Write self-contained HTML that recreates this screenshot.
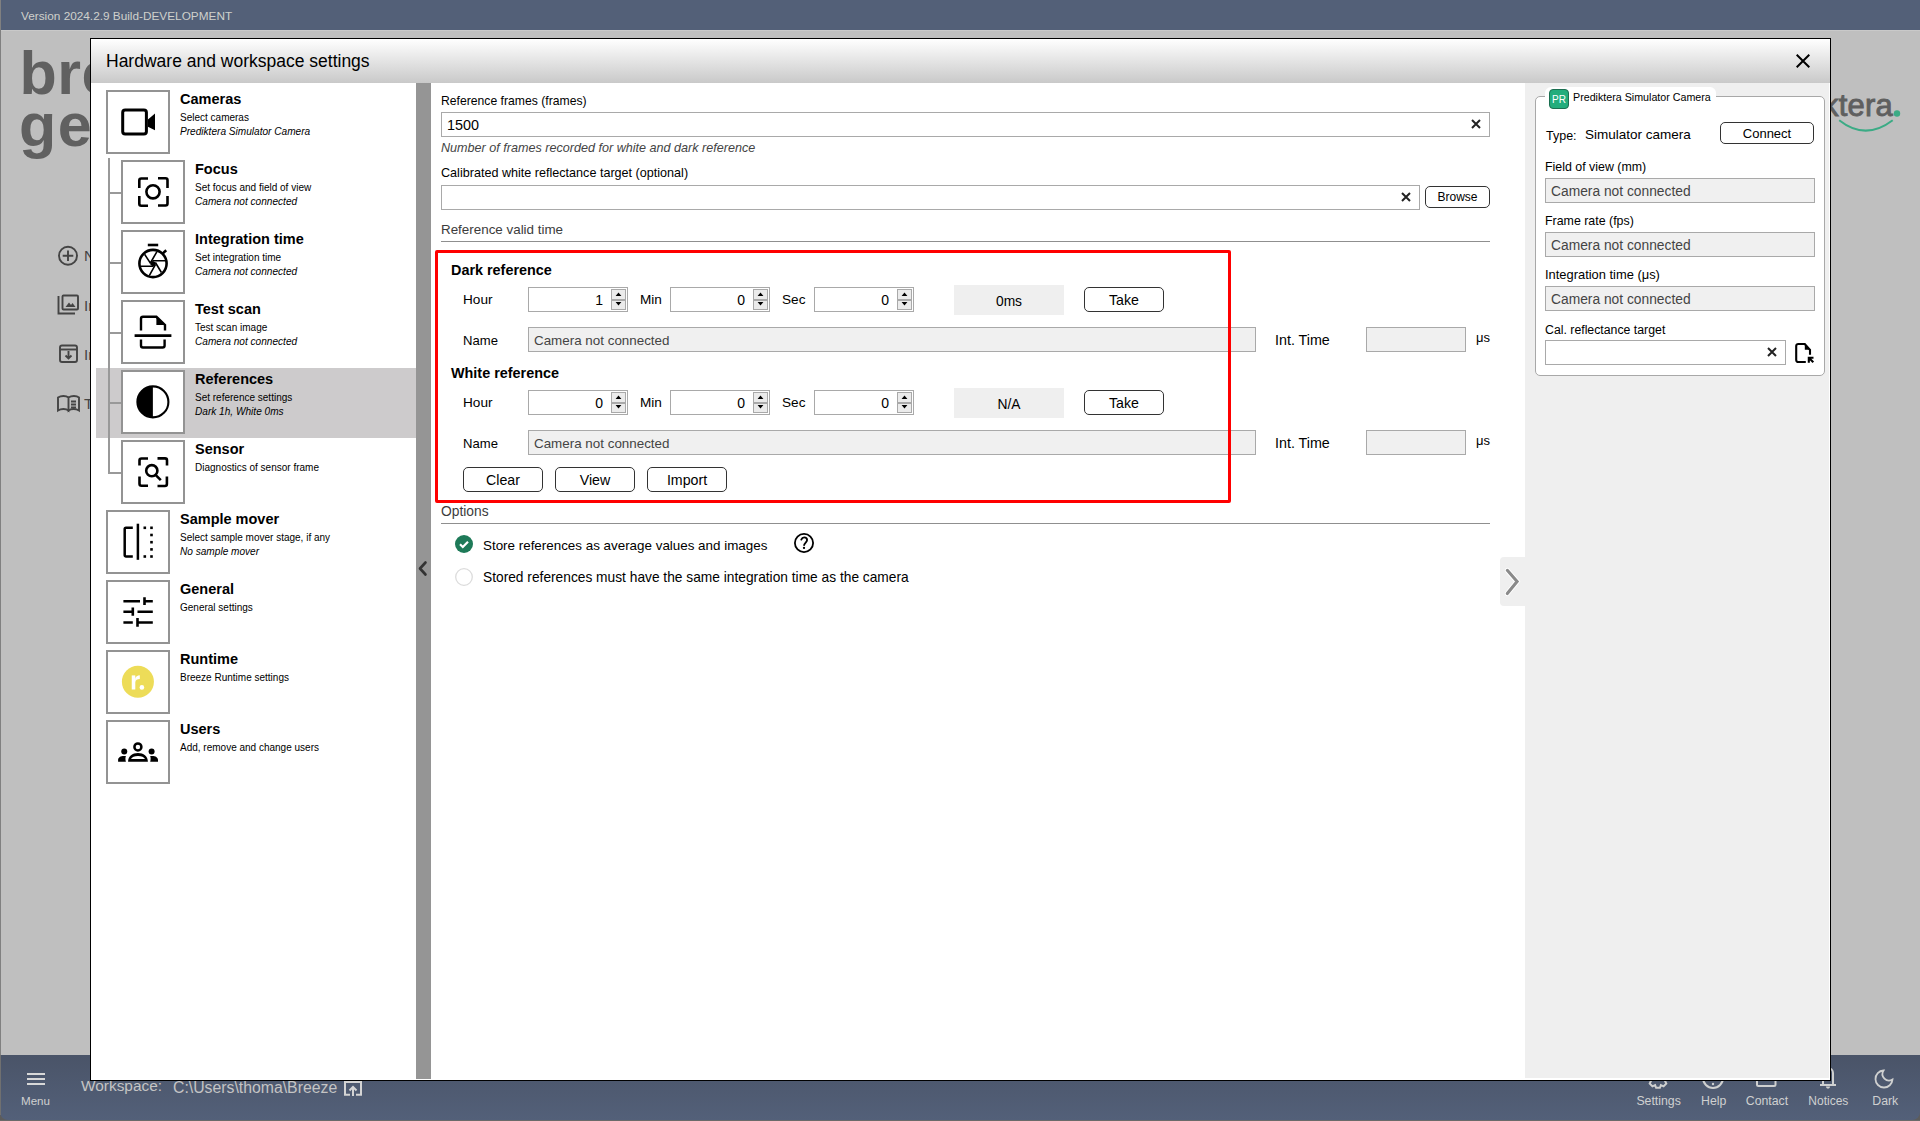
<!DOCTYPE html><html><head><meta charset="utf-8"><style>
html,body{margin:0;padding:0;}
body{width:1920px;height:1121px;position:relative;overflow:hidden;background:#bfbfbf;font-family:"Liberation Sans",sans-serif;}
.t{position:absolute;white-space:nowrap;}
.r{position:absolute;box-sizing:border-box;}
</style></head><body>
<div class="r" style="left:0px;top:0px;width:1920px;height:30px;background:#536078;"></div>
<div class="r" style="left:0px;top:30px;width:1920px;height:1px;background:#c9c9c9;"></div>
<div class="r" style="left:0px;top:0px;width:1px;height:1121px;background:#808080;"></div>
<div class="t" style="left:21px;top:10.81px;font-size:11.8px;line-height:11.8px;color:#cfd0cc;">Version 2024.2.9 Build-DEVELOPMENT</div>
<div class="t" style="left:19.5px;top:43.36px;font-size:61px;line-height:61px;color:#606060;font-weight:bold;letter-spacing:0.5px;">breeze</div>
<div class="t" style="left:19px;top:94.86px;font-size:61px;line-height:61px;color:#606060;font-weight:bold;letter-spacing:1.5px;">genie</div>
<div class="t" style="left:1823px;top:89.76px;font-size:31px;line-height:31px;color:#5f5f5f;-webkit-text-stroke:0.9px #5f5f5f;letter-spacing:0.2px;">ktera</div>
<svg class="r" style="left:1830px;top:95px;" width="90" height="45" viewBox="0 0 90 45"><circle cx="67" cy="18.5" r="3.2" fill="#3bab85"/><path d="M9.2 25.2 Q35.5 46 62.7 25.2" fill="none" stroke="#3bab85" stroke-width="2"/></svg>
<svg class="r" style="left:50px;top:240px;" width="40" height="180" viewBox="0 0 40 180"><g fill="none" stroke="#444" stroke-width="1.9"><circle cx="18" cy="15.8" r="9"/><path d="M18 10.5v10.6M12.7 15.8h10.6"/><path d="M8.5 56v17.5h16.5"/><rect x="12.5" y="55.5" width="15.5" height="14" rx="1"/><path d="M15.5 67l3.5-4.5 2 2.5 1.5-2 3 4z" fill="#444" stroke="none"/><rect x="10" y="105.5" width="17" height="16.5" rx="2"/><path d="M10 109.5h17"/><path d="M18.5 111v7M15.5 115.5l3 3 3-3"/><path d="M8 157.5c3-2 8-2 10.5 0v13c-2.5-2-7.5-2-10.5 0zM18.5 157.5c3-2 8-2 10.5 0v13c-3-2-8-2-10.5 0z"/><path d="M21 161.5h5M21 164.5h5M21 167.5h5"/></g></svg>
<div class="t" style="left:84px;top:248.30px;font-size:15px;line-height:15px;color:#444;">New</div>
<div class="t" style="left:84px;top:298.30px;font-size:15px;line-height:15px;color:#444;">Images</div>
<div class="t" style="left:84px;top:347.30px;font-size:15px;line-height:15px;color:#444;">Import</div>
<div class="t" style="left:84px;top:396.30px;font-size:15px;line-height:15px;color:#444;">Tutorials</div>
<div class="r" style="left:0px;top:1100px;width:1920px;height:21px;background:#5c5c5c;"></div>
<div class="r" style="left:0;top:1055px;width:1920px;height:65px;background:linear-gradient(#4a5468,#536079);border-radius:0 0 8px 8px;"></div>
<div class="r" style="left:0px;top:1120px;width:1920px;height:1px;background:#6a6a6a;"></div>
<div class="r" style="left:0px;top:1055px;width:1px;height:60px;background:#707070;"></div>
<svg class="r" style="left:27px;top:1073px;" width="18" height="12" viewBox="0 0 18 12"><path d="M0 1h18M0 6h18M0 11h18" stroke="#d8d8d8" stroke-width="2"/></svg>
<div class="t" style="left:21px;top:1095.18px;font-size:11.6px;line-height:11.6px;color:#cfd0d0;">Menu</div>
<div class="t" style="left:81px;top:1077.96px;font-size:15.4px;line-height:15.4px;color:#c4c4c4;">Workspace:</div>
<div class="t" style="left:173px;top:1079.63px;font-size:15.8px;line-height:15.8px;color:#c4c4c4;">C:\Users\thoma\Breeze</div>
<svg class="r" style="left:343px;top:1080px;" width="21" height="17" viewBox="0 0 21 17"><path d="M7 14.7H2V2h16v12.7h-5" fill="none" stroke="#d4d4d4" stroke-width="2"/><path d="M10 16V7.5M6.5 10.5 10 7l3.5 3.5" fill="none" stroke="#d4d4d4" stroke-width="2"/></svg>
<div class="t" style="left:1636.4px;top:1094.59px;font-size:12.3px;line-height:12.3px;color:#cfd0d0;">Settings</div>
<div class="t" style="left:1701px;top:1094.59px;font-size:12.3px;line-height:12.3px;color:#cfd0d0;">Help</div>
<div class="t" style="left:1745.8px;top:1094.59px;font-size:12.3px;line-height:12.3px;color:#cfd0d0;">Contact</div>
<div class="t" style="left:1808.3px;top:1094.84px;font-size:12.0px;line-height:12.0px;color:#cfd0d0;">Notices</div>
<div class="t" style="left:1872.3px;top:1094.59px;font-size:12.3px;line-height:12.3px;color:#cfd0d0;">Dark</div>
<svg class="r" style="left:1640px;top:1060px;" width="260" height="32" viewBox="0 0 260 32"><g fill="none" stroke="#cfd0d0" stroke-width="2"><path d="M15.09 10.98 L16.09 8.18 L19.91 8.18 L20.91 10.98 L20.91 10.98 L23.59 9.71 L26.29 12.41 L25.02 15.09 L25.02 15.09 L27.82 16.09 L27.82 19.91 L25.02 20.91 L25.02 20.91 L26.29 23.59 L23.59 26.29 L20.91 25.02 L20.91 25.02 L19.91 27.82 L16.09 27.82 L15.09 25.02 L15.09 25.02 L12.41 26.29 L9.71 23.59 L10.98 20.91 L10.98 20.91 L8.18 19.91 L8.18 16.09 L10.98 15.09 L10.98 15.09 L9.71 12.41 L12.41 9.71 L15.09 10.98Z"/><circle cx="73" cy="18" r="10"/><rect x="117" y="8" width="18.5" height="18" rx="1.5"/><path d="M180 25h16"/><path d="M185.9 26.6h4.2a2.1 2.1 0 0 1-4.2 0z" fill="#cfd0d0" stroke="none"/><path d="M183 24V13a5 5 0 0 1 10 0v11"/><path transform="translate(244 19)" d="M-0.486 -8.486A8.5 8.5 0 1 0 8.486 0.486A6.5 6.5 0 0 1 -0.486 -8.486Z" stroke-width="1.8"/></g><circle cx="73" cy="24" r="1.2" fill="#cfd0d0"/></svg>
<div class="r" style="left:90px;top:38px;width:1741px;height:1043px;border:1px solid #000;background:#fff;"></div>
<div class="r" style="left:91px;top:39px;width:1739px;height:44px;background:linear-gradient(#ffffff,#c9c9c9);"></div>
<div class="t" style="left:106px;top:53.19px;font-size:17.5px;line-height:17.5px;color:#000;">Hardware and workspace settings</div>
<svg class="r" style="left:1796px;top:54px;" width="14" height="14" viewBox="0 0 14 14"><path d="M0.7 0.7L13.3 13.3M13.3 0.7L0.7 13.3" stroke="#000" stroke-width="2"/></svg>
<div class="r" style="left:91px;top:83px;width:325px;height:996px;background:#fff;"></div>
<div class="r" style="left:96px;top:368px;width:320px;height:70px;background:#cdcbcc;"></div>
<div class="r" style="left:108px;top:158px;width:2px;height:316px;background:#999;"></div>
<div class="r" style="left:110px;top:192px;width:11px;height:2px;background:#999;"></div>
<div class="r" style="left:110px;top:262px;width:11px;height:2px;background:#999;"></div>
<div class="r" style="left:110px;top:332px;width:11px;height:2px;background:#999;"></div>
<div class="r" style="left:110px;top:402px;width:11px;height:2px;background:#999;"></div>
<div class="r" style="left:110px;top:472px;width:11px;height:2px;background:#999;"></div>
<div class="r" style="left:106px;top:90px;width:64px;height:64px;border:2px solid #939393;background:#fff;"></div>
<svg class="r" style="left:106px;top:90px;" width="64" height="64" viewBox="0 0 64 64"><rect x="16.7" y="20" width="23.7" height="24" rx="2.5" fill="none" stroke="#000" stroke-width="3"/><path d="M41.9 29.4L49 23.6V40.3L41.9 36.8Z" fill="#000"/></svg>
<div class="t" style="left:180px;top:91.73px;font-size:14.5px;line-height:14.5px;color:#000;font-weight:bold;">Cameras</div>
<div class="t" style="left:180px;top:112.53px;font-size:10px;line-height:10px;color:#000;">Select cameras</div>
<div class="t" style="left:180px;top:127.45px;font-size:10.1px;line-height:10.1px;color:#000;font-style:italic;">Prediktera Simulator Camera</div>
<div class="r" style="left:121px;top:160px;width:64px;height:64px;border:2px solid #939393;background:#fff;"></div>
<svg class="r" style="left:121px;top:160px;" width="64" height="64" viewBox="0 0 64 64"><g fill="none" stroke="#000" stroke-width="2.6"><path d="M18.3 28V20.5a2 2 0 0 1 2-2H27M37 18.3h7.5a2 2 0 0 1 2 2V28M46.5 36v7.5a2 2 0 0 1-2 2H37M27 45.7h-6.7a2 2 0 0 1-2-2V36"/><circle cx="32" cy="31.8" r="6.6"/></g></svg>
<div class="t" style="left:195px;top:161.73px;font-size:14.5px;line-height:14.5px;color:#000;font-weight:bold;">Focus</div>
<div class="t" style="left:195px;top:182.53px;font-size:10px;line-height:10px;color:#000;">Set focus and field of view</div>
<div class="t" style="left:195px;top:197.45px;font-size:10.1px;line-height:10.1px;color:#000;font-style:italic;">Camera not connected</div>
<div class="r" style="left:121px;top:230px;width:64px;height:64px;border:2px solid #939393;background:#fff;"></div>
<svg class="r" style="left:121px;top:230px;" width="64" height="64" viewBox="0 0 64 64"><g fill="none" stroke="#000"><circle cx="32" cy="33.5" r="13.6" stroke-width="2.6"/><path d="M26.8 15h10.4" stroke-width="2.6"/><path d="M41.6 23.6l3.6-3.4" stroke-width="2.6"/><path d="M23.6 24.3L29.7 33.6M35.8 21.8L29.7 32.5M31.9 30.7H45M34.4 32.5L40.4 42.5M34.4 34.6L28.3 45.7M19.5 36.3H32.2" stroke-width="1.6"/></g><path d="M29.7 32.8L31.6 30.7L34.6 32.4L34.5 34.9L32.3 36.5L29.4 35Z" fill="#000"/></svg>
<div class="t" style="left:195px;top:231.73px;font-size:14.5px;line-height:14.5px;color:#000;font-weight:bold;">Integration time</div>
<div class="t" style="left:195px;top:252.53px;font-size:10px;line-height:10px;color:#000;">Set integration time</div>
<div class="t" style="left:195px;top:267.45px;font-size:10.1px;line-height:10.1px;color:#000;font-style:italic;">Camera not connected</div>
<div class="r" style="left:121px;top:300px;width:64px;height:64px;border:2px solid #939393;background:#fff;"></div>
<svg class="r" style="left:121px;top:300px;" width="64" height="64" viewBox="0 0 64 64"><g fill="none" stroke="#000" stroke-width="2.4"><path d="M20 30.5V18.8a2 2 0 0 1 2-2H35.4L44 25V30.5"/><path d="M13.6 35.6H50.4" stroke-width="2.8"/><path d="M20 39.5v6a2 2 0 0 0 2 2h19.6a2 2 0 0 0 2-2v-6"/></g><path d="M35.4 16.8L44 25H35.4Z" fill="#000"/></svg>
<div class="t" style="left:195px;top:301.73px;font-size:14.5px;line-height:14.5px;color:#000;font-weight:bold;">Test scan</div>
<div class="t" style="left:195px;top:322.53px;font-size:10px;line-height:10px;color:#000;">Test scan image</div>
<div class="t" style="left:195px;top:337.45px;font-size:10.1px;line-height:10.1px;color:#000;font-style:italic;">Camera not connected</div>
<div class="r" style="left:121px;top:370px;width:64px;height:64px;border:2px solid #939393;background:#fff;"></div>
<svg class="r" style="left:121px;top:370px;" width="64" height="64" viewBox="0 0 64 64"><circle cx="31.9" cy="31.9" r="15.5" fill="none" stroke="#000" stroke-width="2.1"/><path d="M31.9 16.4A15.5 15.5 0 0 0 31.9 47.4Z" fill="#000"/></svg>
<div class="t" style="left:195px;top:371.73px;font-size:14.5px;line-height:14.5px;color:#000;font-weight:bold;">References</div>
<div class="t" style="left:195px;top:392.53px;font-size:10px;line-height:10px;color:#000;">Set reference settings</div>
<div class="t" style="left:195px;top:407.45px;font-size:10.1px;line-height:10.1px;color:#000;font-style:italic;">Dark 1h, White 0ms</div>
<div class="r" style="left:121px;top:440px;width:64px;height:64px;border:2px solid #939393;background:#fff;"></div>
<svg class="r" style="left:121px;top:440px;" width="64" height="64" viewBox="0 0 64 64"><g fill="none" stroke="#000" stroke-width="2.6"><path d="M18.5 25.5V20.5a2 2 0 0 1 2-2H27M36.5 18.4h7.5a2 2 0 0 1 2 2V25.5M45.9 36.5v7.5a2 2 0 0 1-2 2H36.5M27 45.8h-6.5a2 2 0 0 1-2-2V36.5"/><circle cx="30.8" cy="30.7" r="5.6"/><path d="M34.8 35.2L39.8 40.2"/></g></svg>
<div class="t" style="left:195px;top:441.73px;font-size:14.5px;line-height:14.5px;color:#000;font-weight:bold;">Sensor</div>
<div class="t" style="left:195px;top:462.53px;font-size:10px;line-height:10px;color:#000;">Diagnostics of sensor frame</div>
<div class="r" style="left:106px;top:510px;width:64px;height:64px;border:2px solid #939393;background:#fff;"></div>
<svg class="r" style="left:106px;top:510px;" width="64" height="64" viewBox="0 0 64 64"><g fill="none" stroke="#000" stroke-width="2.5"><path d="M26.8 17.7H20a1.3 1.3 0 0 0-1.3 1.3V45.2a1.3 1.3 0 0 0 1.3 1.3H26.8"/><path d="M31.9 13.7V49.8"/></g><g fill="#000"><rect x="37.5" y="16.5" width="2.6" height="2.6"/><rect x="37.5" y="45.2" width="2.6" height="2.6"/><rect x="44.2" y="16.5" width="2.6" height="2.6"/><rect x="44.2" y="23.7" width="2.6" height="2.6"/><rect x="44.2" y="30.9" width="2.6" height="2.6"/><rect x="44.2" y="38.1" width="2.6" height="2.6"/><rect x="44.2" y="45.2" width="2.6" height="2.6"/></g></svg>
<div class="t" style="left:180px;top:511.73px;font-size:14.5px;line-height:14.5px;color:#000;font-weight:bold;">Sample mover</div>
<div class="t" style="left:180px;top:532.54px;font-size:10px;line-height:10px;color:#000;">Select sample mover stage, if any</div>
<div class="t" style="left:180px;top:547.45px;font-size:10.1px;line-height:10.1px;color:#000;font-style:italic;">No sample mover</div>
<div class="r" style="left:106px;top:580px;width:64px;height:64px;border:2px solid #939393;background:#fff;"></div>
<svg class="r" style="left:106px;top:580px;" width="64" height="64" viewBox="0 0 64 64"><g fill="none" stroke="#000" stroke-width="2.6"><path d="M17.4 21.2H34M38.5 21.2H46.8M38.5 17.3V25"/><path d="M17.4 31.8H26.8M26.8 27.5V35.8M31.5 31.8H46.8"/><path d="M17.4 42.5H26.8M31.5 38V46.7M31.5 42.5H46.8"/></g></svg>
<div class="t" style="left:180px;top:581.73px;font-size:14.5px;line-height:14.5px;color:#000;font-weight:bold;">General</div>
<div class="t" style="left:180px;top:602.54px;font-size:10px;line-height:10px;color:#000;">General settings</div>
<div class="r" style="left:106px;top:650px;width:64px;height:64px;border:2px solid #939393;background:#fff;"></div>
<svg class="r" style="left:106px;top:650px;" width="64" height="64" viewBox="0 0 64 64"><circle cx="31.9" cy="31.8" r="16" fill="#eddc58"/><g fill="#fff"><rect x="25.75" y="25.4" width="3.55" height="14.1"/><path d="M29.1 28.8C29.6 26.4 31.5 25.2 33.8 25.2V28.9C31.3 28.9 29.3 30 29.3 32.5Z"/><circle cx="35.9" cy="37.4" r="2.3"/></g></svg>
<div class="t" style="left:180px;top:651.73px;font-size:14.5px;line-height:14.5px;color:#000;font-weight:bold;">Runtime</div>
<div class="t" style="left:180px;top:672.54px;font-size:10px;line-height:10px;color:#000;">Breeze Runtime settings</div>
<div class="r" style="left:106px;top:720px;width:64px;height:64px;border:2px solid #939393;background:#fff;"></div>
<svg class="r" style="left:106px;top:720px;" width="64" height="64" viewBox="0 0 64 64"><g fill="#000"><circle cx="18.25" cy="31.4" r="3"/><circle cx="45.6" cy="31.4" r="3"/><path d="M12.1 41.75V40C12.1 37.5 14.5 36 18 36H19.9C19.3 37.5 19.3 40 19.9 41.75Z"/><path d="M52 41.75V40C52 37.5 49.6 36 46.1 36H44.2C44.8 37.5 44.8 40 44.2 41.75Z"/><path fill-rule="evenodd" d="M22.1 41.75C22.1 36.5 26.5 33.1 32 33.1C37.5 33.1 41.9 36.5 41.9 41.75ZM25 39.1C26 36.9 28.5 35.9 32 35.9C35.5 35.9 38 36.9 39 39.1Z"/></g><circle cx="31.9" cy="26.9" r="3.5" fill="none" stroke="#000" stroke-width="2.5"/></svg>
<div class="t" style="left:180px;top:721.73px;font-size:14.5px;line-height:14.5px;color:#000;font-weight:bold;">Users</div>
<div class="t" style="left:180px;top:742.54px;font-size:10px;line-height:10px;color:#000;">Add, remove and change users</div>
<div class="r" style="left:416px;top:83px;width:15px;height:996px;background:#959595;"></div>
<svg class="r" style="left:417px;top:560px;" width="12" height="17" viewBox="0 0 12 17"><path d="M8.5 2.5L3 8.5l5.5 6" fill="none" stroke="#333" stroke-width="2.6" stroke-linecap="round" stroke-linejoin="round"/></svg>
<div class="r" style="left:431px;top:83px;width:1094px;height:996px;background:#fff;"></div>
<div class="t" style="left:441px;top:94.67px;font-size:12.2px;line-height:12.2px;color:#000;">Reference frames (frames)</div>
<div class="r" style="left:441px;top:112px;width:1049px;height:25px;border:1px solid #a9a9a9;background:#fff;"></div>
<div class="t" style="left:447px;top:117.81px;font-size:14.4px;line-height:14.4px;color:#000;">1500</div>
<svg class="r" style="left:1470px;top:118px;" width="12" height="12" viewBox="0 0 12 12"><path d="M2 2L10 10M10 2L2 10" stroke="#222" stroke-width="2"/></svg>
<div class="t" style="left:441px;top:141.83px;font-size:12.6px;line-height:12.6px;color:#444;font-style:italic;">Number of frames recorded for white and dark reference</div>
<div class="t" style="left:441px;top:167.33px;font-size:12.6px;line-height:12.6px;color:#000;">Calibrated white reflectance target (optional)</div>
<div class="r" style="left:441px;top:185px;width:979px;height:25px;border:1px solid #a9a9a9;background:#fff;"></div>
<svg class="r" style="left:1400px;top:191px;" width="12" height="12" viewBox="0 0 12 12"><path d="M2 2L10 10M10 2L2 10" stroke="#222" stroke-width="2"/></svg>
<div class="r" style="left:1425px;top:186px;width:65px;height:22px;border:1px solid #333;border-radius:5px;background:#fff;"></div>
<div class="t" style="left:1425px;width:65px;text-align:center;top:191.34px;font-size:12px;line-height:12px;color:#000;">Browse</div>
<div class="t" style="left:441px;top:222.66px;font-size:13.4px;line-height:13.4px;color:#3c3c3c;">Reference valid time</div>
<div class="r" style="left:441px;top:241px;width:1049px;height:1px;background:#8f8f8f;"></div>
<div class="t" style="left:451px;top:263.31px;font-size:14.4px;line-height:14.4px;color:#000;font-weight:bold;">Dark reference</div>
<div class="t" style="left:463px;top:292.99px;font-size:13.6px;line-height:13.6px;color:#000;">Hour</div>
<div class="r" style="left:528px;top:287px;width:100px;height:25px;border:1px solid #a9a9a9;background:#fff;"></div>
<div class="t" style="left:528px;width:75px;text-align:right;top:293.15px;font-size:14px;line-height:14px;color:#000;">1</div>
<div class="r" style="left:611px;top:289px;width:15px;height:11px;border:1px solid #a9a9a9;background:#ebebeb;"></div>
<div class="r" style="left:611px;top:300px;width:15px;height:10px;border:1px solid #a9a9a9;background:#ebebeb;"></div>
<svg class="r" style="left:611px;top:289px;" width="15" height="21" viewBox="0 0 15 21"><path d="M4.6 7H10.4L7.5 3.6Z M4.6 13H10.4L7.5 16.4Z" fill="#000"/></svg>
<div class="t" style="left:640px;top:292.99px;font-size:13.6px;line-height:13.6px;color:#000;">Min</div>
<div class="r" style="left:670px;top:287px;width:100px;height:25px;border:1px solid #a9a9a9;background:#fff;"></div>
<div class="t" style="left:670px;width:75px;text-align:right;top:293.15px;font-size:14px;line-height:14px;color:#000;">0</div>
<div class="r" style="left:753px;top:289px;width:15px;height:11px;border:1px solid #a9a9a9;background:#ebebeb;"></div>
<div class="r" style="left:753px;top:300px;width:15px;height:10px;border:1px solid #a9a9a9;background:#ebebeb;"></div>
<svg class="r" style="left:753px;top:289px;" width="15" height="21" viewBox="0 0 15 21"><path d="M4.6 7H10.4L7.5 3.6Z M4.6 13H10.4L7.5 16.4Z" fill="#000"/></svg>
<div class="t" style="left:782px;top:292.99px;font-size:13.6px;line-height:13.6px;color:#000;">Sec</div>
<div class="r" style="left:814px;top:287px;width:100px;height:25px;border:1px solid #a9a9a9;background:#fff;"></div>
<div class="t" style="left:814px;width:75px;text-align:right;top:293.15px;font-size:14px;line-height:14px;color:#000;">0</div>
<div class="r" style="left:897px;top:289px;width:15px;height:11px;border:1px solid #a9a9a9;background:#ebebeb;"></div>
<div class="r" style="left:897px;top:300px;width:15px;height:10px;border:1px solid #a9a9a9;background:#ebebeb;"></div>
<svg class="r" style="left:897px;top:289px;" width="15" height="21" viewBox="0 0 15 21"><path d="M4.6 7H10.4L7.5 3.6Z M4.6 13H10.4L7.5 16.4Z" fill="#000"/></svg>
<div class="r" style="left:954px;top:285px;width:110px;height:30px;background:#efefef;"></div>
<div class="t" style="left:954px;width:110px;text-align:center;top:294.82px;font-size:13.8px;line-height:13.8px;color:#000;">0ms</div>
<div class="r" style="left:1084px;top:287px;width:80px;height:25px;border:1.5px solid #333;border-radius:5px;background:#fff;"></div>
<div class="t" style="left:1084px;width:80px;text-align:center;top:292.98px;font-size:14.2px;line-height:14.2px;color:#000;">Take</div>
<div class="t" style="left:463px;top:333.91px;font-size:13.1px;line-height:13.1px;color:#000;">Name</div>
<div class="r" style="left:528px;top:327px;width:728px;height:25px;border:1px solid #a9a9a9;background:#f0f0f0;"></div>
<div class="t" style="left:534px;top:333.66px;font-size:13.4px;line-height:13.4px;color:#444;">Camera not connected</div>
<div class="t" style="left:1275px;top:332.90px;font-size:14.3px;line-height:14.3px;color:#000;">Int. Time</div>
<div class="r" style="left:1366px;top:327px;width:100px;height:25px;border:1px solid #a9a9a9;background:#f0f0f0;"></div>
<div class="t" style="left:1476px;top:331.00px;font-size:13px;line-height:13px;color:#000;">μs</div>
<div class="t" style="left:451px;top:366.31px;font-size:14.4px;line-height:14.4px;color:#000;font-weight:bold;">White reference</div>
<div class="t" style="left:463px;top:395.99px;font-size:13.6px;line-height:13.6px;color:#000;">Hour</div>
<div class="r" style="left:528px;top:390px;width:100px;height:25px;border:1px solid #a9a9a9;background:#fff;"></div>
<div class="t" style="left:528px;width:75px;text-align:right;top:396.15px;font-size:14px;line-height:14px;color:#000;">0</div>
<div class="r" style="left:611px;top:392px;width:15px;height:11px;border:1px solid #a9a9a9;background:#ebebeb;"></div>
<div class="r" style="left:611px;top:403px;width:15px;height:10px;border:1px solid #a9a9a9;background:#ebebeb;"></div>
<svg class="r" style="left:611px;top:392px;" width="15" height="21" viewBox="0 0 15 21"><path d="M4.6 7H10.4L7.5 3.6Z M4.6 13H10.4L7.5 16.4Z" fill="#000"/></svg>
<div class="t" style="left:640px;top:395.99px;font-size:13.6px;line-height:13.6px;color:#000;">Min</div>
<div class="r" style="left:670px;top:390px;width:100px;height:25px;border:1px solid #a9a9a9;background:#fff;"></div>
<div class="t" style="left:670px;width:75px;text-align:right;top:396.15px;font-size:14px;line-height:14px;color:#000;">0</div>
<div class="r" style="left:753px;top:392px;width:15px;height:11px;border:1px solid #a9a9a9;background:#ebebeb;"></div>
<div class="r" style="left:753px;top:403px;width:15px;height:10px;border:1px solid #a9a9a9;background:#ebebeb;"></div>
<svg class="r" style="left:753px;top:392px;" width="15" height="21" viewBox="0 0 15 21"><path d="M4.6 7H10.4L7.5 3.6Z M4.6 13H10.4L7.5 16.4Z" fill="#000"/></svg>
<div class="t" style="left:782px;top:395.99px;font-size:13.6px;line-height:13.6px;color:#000;">Sec</div>
<div class="r" style="left:814px;top:390px;width:100px;height:25px;border:1px solid #a9a9a9;background:#fff;"></div>
<div class="t" style="left:814px;width:75px;text-align:right;top:396.15px;font-size:14px;line-height:14px;color:#000;">0</div>
<div class="r" style="left:897px;top:392px;width:15px;height:11px;border:1px solid #a9a9a9;background:#ebebeb;"></div>
<div class="r" style="left:897px;top:403px;width:15px;height:10px;border:1px solid #a9a9a9;background:#ebebeb;"></div>
<svg class="r" style="left:897px;top:392px;" width="15" height="21" viewBox="0 0 15 21"><path d="M4.6 7H10.4L7.5 3.6Z M4.6 13H10.4L7.5 16.4Z" fill="#000"/></svg>
<div class="r" style="left:954px;top:388px;width:110px;height:30px;background:#efefef;"></div>
<div class="t" style="left:954px;width:110px;text-align:center;top:397.82px;font-size:13.8px;line-height:13.8px;color:#000;">N/A</div>
<div class="r" style="left:1084px;top:390px;width:80px;height:25px;border:1.5px solid #333;border-radius:5px;background:#fff;"></div>
<div class="t" style="left:1084px;width:80px;text-align:center;top:395.98px;font-size:14.2px;line-height:14.2px;color:#000;">Take</div>
<div class="t" style="left:463px;top:436.91px;font-size:13.1px;line-height:13.1px;color:#000;">Name</div>
<div class="r" style="left:528px;top:430px;width:728px;height:25px;border:1px solid #a9a9a9;background:#f0f0f0;"></div>
<div class="t" style="left:534px;top:436.66px;font-size:13.4px;line-height:13.4px;color:#444;">Camera not connected</div>
<div class="t" style="left:1275px;top:435.90px;font-size:14.3px;line-height:14.3px;color:#000;">Int. Time</div>
<div class="r" style="left:1366px;top:430px;width:100px;height:25px;border:1px solid #a9a9a9;background:#f0f0f0;"></div>
<div class="t" style="left:1476px;top:434.00px;font-size:13px;line-height:13px;color:#000;">μs</div>
<div class="r" style="left:463px;top:467px;width:80px;height:25px;border:1.5px solid #333;border-radius:5px;background:#fff;"></div>
<div class="t" style="left:463px;width:80px;text-align:center;top:472.98px;font-size:14.2px;line-height:14.2px;color:#000;">Clear</div>
<div class="r" style="left:555px;top:467px;width:80px;height:25px;border:1.5px solid #333;border-radius:5px;background:#fff;"></div>
<div class="t" style="left:555px;width:80px;text-align:center;top:472.98px;font-size:14.2px;line-height:14.2px;color:#000;">View</div>
<div class="r" style="left:647px;top:467px;width:80px;height:25px;border:1.5px solid #333;border-radius:5px;background:#fff;"></div>
<div class="t" style="left:647px;width:80px;text-align:center;top:472.98px;font-size:14.2px;line-height:14.2px;color:#000;">Import</div>
<div class="r" style="left:435px;top:250px;width:796px;height:253px;border:3px solid #ff0000;border-radius:2px;"></div>
<div class="t" style="left:441px;top:505.32px;font-size:13.8px;line-height:13.8px;color:#3c3c3c;">Options</div>
<div class="r" style="left:441px;top:523px;width:1049px;height:1px;background:#8f8f8f;"></div>
<svg class="r" style="left:455px;top:535px;" width="18" height="18" viewBox="0 0 18 18"><circle cx="9" cy="9" r="9" fill="#1e7a58"/><path d="M5 9.3l2.8 2.7L13 6.7" fill="none" stroke="#fff" stroke-width="2.2"/></svg>
<div class="t" style="left:483px;top:538.66px;font-size:13.4px;line-height:13.4px;color:#000;">Store references as average values and images</div>
<svg class="r" style="left:793px;top:532px;" width="22" height="22" viewBox="0 0 22 22"><circle cx="11" cy="11" r="9.1" fill="none" stroke="#000" stroke-width="1.8"/><path d="M8.3 7.6C8.9 6.1 10 5.4 11.2 5.4C12.9 5.4 14.1 6.5 14.1 8C14.1 10 11.3 11 11.1 13.2" fill="none" stroke="#000" stroke-width="1.8" stroke-linecap="round"/><circle cx="11" cy="15.9" r="1.15" fill="#000"/></svg>
<svg class="r" style="left:455px;top:568px;" width="18" height="18" viewBox="0 0 18 18"><circle cx="9" cy="9" r="8.3" fill="#fff" stroke="#dcdcdc" stroke-width="1.3"/></svg>
<div class="t" style="left:483px;top:571.35px;font-size:13.76px;line-height:13.76px;color:#000;">Stored references must have the same integration time as the camera</div>
<div class="r" style="left:1500px;top:557px;width:25px;height:49px;background:#efefef;border-radius:4px 0 0 4px;"></div>
<svg class="r" style="left:1503px;top:566px;" width="18" height="32" viewBox="0 0 18 32"><path d="M4.3 4.3L14.1 15.5L4.3 27.5" fill="none" stroke="#fff" stroke-width="5" stroke-linecap="round"/><path d="M4.3 4.3L14.1 15.5L4.3 27.5" fill="none" stroke="#8a8a8a" stroke-width="3.1" stroke-linecap="round"/></svg>
<div class="r" style="left:1525px;top:83px;width:304px;height:995px;background:#efefef;"></div>
<div class="r" style="left:1535px;top:96px;width:290px;height:280px;border:1px solid #a8a8a8;border-radius:5px;background:#fff;"></div>
<div class="r" style="left:1545px;top:87px;width:171px;height:20px;background:#fff;border-radius:6px;"></div>
<div class="r" style="left:1549px;top:89px;width:20px;height:20px;background:#22ad7c;border-radius:4px;border:1px solid #1b6e50;"></div>
<div class="t" style="left:1549px;width:20px;text-align:center;top:94.53px;font-size:10px;line-height:10px;color:#fff;">PR</div>
<div class="t" style="left:1573px;top:91.94px;font-size:10.7px;line-height:10.7px;color:#000;">Prediktera Simulator Camera</div>
<div class="t" style="left:1546px;top:129.92px;font-size:12.5px;line-height:12.5px;color:#000;">Type:</div>
<div class="t" style="left:1585px;top:127.57px;font-size:13.5px;line-height:13.5px;color:#000;">Simulator camera</div>
<div class="r" style="left:1720px;top:122px;width:94px;height:22px;border:1px solid #333;border-radius:5px;background:#fff;"></div>
<div class="t" style="left:1720px;width:94px;text-align:center;top:126.50px;font-size:13.0px;line-height:13.0px;color:#000;">Connect</div>
<div class="t" style="left:1545px;top:160.80px;font-size:12.4px;line-height:12.4px;color:#000;">Field of view (mm)</div>
<div class="r" style="left:1545px;top:178px;width:270px;height:25px;border:1px solid #a9a9a9;background:#f0f0f0;"></div>
<div class="t" style="left:1551px;top:185.32px;font-size:13.8px;line-height:13.8px;color:#444;">Camera not connected</div>
<div class="t" style="left:1545px;top:215.30px;font-size:12.4px;line-height:12.4px;color:#000;">Frame rate (fps)</div>
<div class="r" style="left:1545px;top:232px;width:270px;height:25px;border:1px solid #a9a9a9;background:#f0f0f0;"></div>
<div class="t" style="left:1551px;top:239.32px;font-size:13.8px;line-height:13.8px;color:#444;">Camera not connected</div>
<div class="t" style="left:1545px;top:269.08px;font-size:12.9px;line-height:12.9px;color:#000;">Integration time (μs)</div>
<div class="r" style="left:1545px;top:286px;width:270px;height:25px;border:1px solid #a9a9a9;background:#f0f0f0;"></div>
<div class="t" style="left:1551px;top:293.32px;font-size:13.8px;line-height:13.8px;color:#444;">Camera not connected</div>
<div class="t" style="left:1545px;top:323.59px;font-size:12.3px;line-height:12.3px;color:#000;">Cal. reflectance target</div>
<div class="r" style="left:1545px;top:340px;width:241px;height:25px;border:1px solid #a9a9a9;background:#fff;"></div>
<svg class="r" style="left:1766px;top:346px;" width="12" height="12" viewBox="0 0 12 12"><path d="M2 2L10 10M10 2L2 10" stroke="#222" stroke-width="2"/></svg>
<svg class="r" style="left:1794px;top:342px;" width="22" height="23" viewBox="0 0 22 23"><path d="M11.8 20H4.2a2 2 0 0 1-2-2V4a2 2 0 0 1 2-2H10.8L16 7.8V12.8" fill="none" stroke="#000" stroke-width="2.1"/><path d="M10.8 2L16 7.8H10.8Z" fill="#000"/><path d="M14.8 20.8V15.8H19.5M15 16L19.3 20.3" fill="none" stroke="#000" stroke-width="2.1"/></svg>
</body></html>
